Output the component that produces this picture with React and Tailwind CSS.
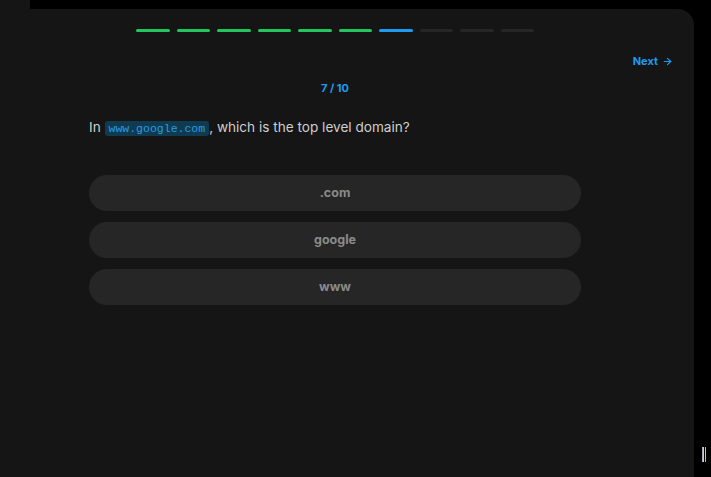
import { ArrowRight } from 'lucide-react';

const steps = [
  'done', 'done', 'done', 'done', 'done', 'done', 'current', 'todo', 'todo', 'todo',
];

const options = ['.com', 'google', 'www'];

const stepColor = (state) => {
  switch (state) {
    case 'done':
      return 'bg-[#22c55e]';
    case 'current':
      return 'bg-[#1d9bf0]';
    default:
      return 'bg-[#262626]';
  }
};

const App = () => {
  return (
    <div className="relative h-[477px] w-[711px] overflow-hidden bg-black font-['Inter',sans-serif]">
      {/* top strip */}
      <div className="h-[9px] w-[30px] bg-[#151515]" />

      {/* quiz panel */}
      <div className="flex h-[468px] w-[694px] flex-col rounded-tr-[16px] bg-[#151515] pr-[24px]">
        {/* progress */}
        <div className="mx-auto mt-[20px] flex w-[398px] gap-[7px]">
          {steps.map((s, i) => (
            <div key={i} className={`h-[3px] flex-1 rounded-full ${stepColor(s)}`} />
          ))}
        </div>

        <div className="mt-[21px] flex justify-end">
          <button className="-mr-[3px] flex items-center gap-[4px] text-[11px] font-bold leading-[16px] text-[#1d9bf0]">
            Next
            <ArrowRight className="h-[11px] w-[11px]" strokeWidth={2.5} />
          </button>
        </div>

        <div className="mx-auto w-[492px]">
          <p className="mt-[11px] text-center text-[11px] font-bold leading-[16px] text-[#1d9bf0]">
            7 / 10
          </p>

          <p className="mt-[21px] text-[13.6px] leading-[20px] text-[#cfcfcf]">
            In{' '}
            <code className="rounded-[3px] bg-[#103a50] px-[4px] py-[1px] font-['Liberation_Mono',monospace] text-[11.5px] text-[#2a9ce0]">
              www.google.com
            </code>
            , which is the top level domain?
          </p>

          <div className="mt-[36px] flex flex-col gap-[11px]">
            {options.map((opt) => (
              <button
                key={opt}
                className="flex h-[36px] w-full items-center justify-center rounded-full bg-[#262626] text-[12.5px] font-bold text-[#8a8a8a]"
              >
                {opt}
              </button>
            ))}
          </div>
        </div>
      </div>

      {/* scroll handle */}
      <div className="absolute left-[702px] top-[447px] flex gap-[1px]">
        <div className="h-[15px] w-[1.5px] bg-gradient-to-r from-[#9a9aa8] to-[#e0e0ea]" />
        <div className="h-[15px] w-[1.5px] bg-gradient-to-r from-[#9a9aa8] to-[#e0e0ea]" />
      </div>
    </div>
  );
};

export default App;
